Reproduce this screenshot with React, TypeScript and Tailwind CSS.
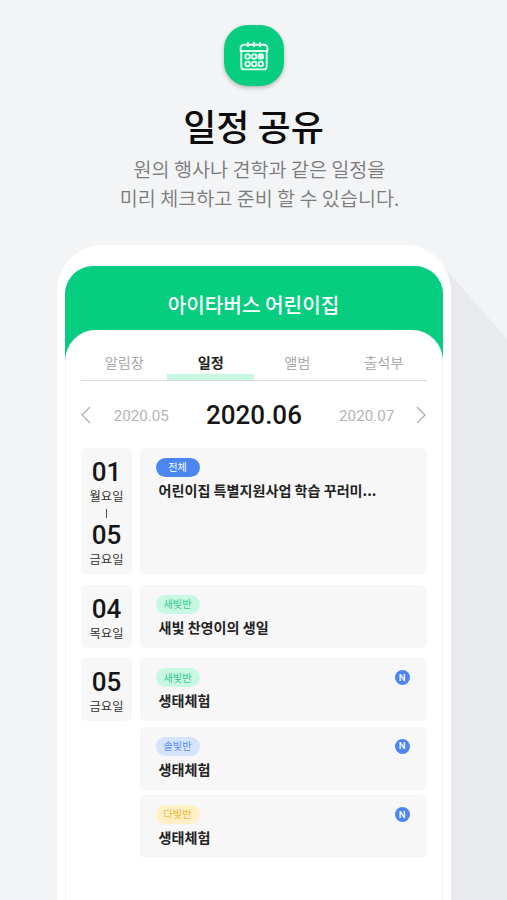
/**
 * Pantalla promocional del calendario compartido
 */

interface Tab {
  name: string;
  active?: boolean;
}

interface EventItem {
  group: string;
  title: string;
  badge: string; // Clases de color de la etiqueta
  isNew?: boolean;
}

interface DayItem {
  day: string;
  weekday: string;
}

interface ScheduleRow {
  days: DayItem[];
  events: EventItem[];
}

const tabs: Tab[] = [
  { name: "알림장" },
  { name: "일정", active: true },
  { name: "앨범" },
  { name: "출석부" },
];

const schedule: ScheduleRow[] = [
  {
    days: [
      { day: "01", weekday: "월요일" },
      { day: "05", weekday: "금요일" },
    ],
    events: [
      {
        group: "전체",
        title: "어린이집 특별지원사업 학습 꾸러미...",
        badge: "bg-[#4c86f0] text-white",
      },
    ],
  },
  {
    days: [{ day: "04", weekday: "목요일" }],
    events: [
      {
        group: "새빛반",
        title: "새빛 찬영이의 생일",
        badge: "bg-[#c8f7e2] text-[#2fcb8b]",
      },
    ],
  },
  {
    days: [{ day: "05", weekday: "금요일" }],
    events: [
      {
        group: "새빛반",
        title: "생태체험",
        badge: "bg-[#c8f7e2] text-[#2fcb8b]",
        isNew: true,
      },
      {
        group: "솔빛반",
        title: "생태체험",
        badge: "bg-[#d5e3fd] text-[#5b8ff2]",
        isNew: true,
      },
      {
        group: "다빛반",
        title: "생태체험",
        badge: "bg-[#fff0c6] text-[#f8b53a]",
        isNew: true,
      },
    ],
  },
];

function CalendarIcon() {
  return (
    <svg
      width="30"
      height="30"
      viewBox="0 0 30 30"
      fill="none"
      stroke="#dcfff0"
      strokeWidth="1.9"
      strokeLinecap="round"
      strokeLinejoin="round"
    >
      <path d="M1.6 10V7.4Q1.6 3.8 5.2 3.8H24.8Q28.4 3.8 28.4 7.4V10Z" />
      <path d="M2.3 10V25.4Q2.3 28.4 5.3 28.4H24.7Q27.7 28.4 27.7 25.4V10" />
      <path d="M9 1.8v3.4M15 1.8v3.4M21 1.8v3.4" strokeWidth="2.2" />
      <circle cx="8.6" cy="15.6" r="2.3" />
      <circle cx="15.2" cy="15.6" r="2.3" />
      <circle cx="21.8" cy="15.6" r="2.3" fill="#dcfff0" />
      <circle cx="8.6" cy="22.9" r="2.3" />
      <circle cx="15.2" cy="22.9" r="2.3" />
      <circle cx="21.8" cy="22.9" r="2.3" />
    </svg>
  );
}

function Chevron({ d }: { d: string }) {
  return (
    <svg width="10" height="18" viewBox="0 0 10 18" fill="none" stroke="#b0b0b0" strokeWidth="1.3">
      <path d={d} />
    </svg>
  );
}

function DateCard({ days }: { days: DayItem[] }) {
  return (
    <div className="flex w-[51px] shrink-0 flex-col items-center self-start rounded-[5px] bg-[#f7f7f7] pt-[9px] pb-[6px]">
      {days.map((item, index) => (
        <div key={item.day} className="flex flex-col items-center">
          {/* Separador del rango de fechas */}
          {index > 0 && <span className="mt-[4px] mb-[2px] ml-[2px] h-[9px] w-px bg-[#555]" />}
          <span className="pl-px font-[Roboto] text-[26px] leading-[30px] font-medium text-[#161616]">
            {item.day}
          </span>
          <span className="pl-px text-[12.3px] leading-[18px] text-[#333]">{item.weekday}</span>
        </div>
      ))}
    </div>
  );
}

function EventCard({ event }: { event: EventItem }) {
  return (
    <div className="flex min-h-[63px] flex-1 items-start justify-between rounded-[5px] bg-[#f7f7f7] pt-[10px] pr-[17px] pl-4">
      <div>
        <span
          className={`flex h-[19px] w-11 items-center justify-center rounded-full text-[10.1px] leading-none ${event.badge}`}
        >
          {event.group}
        </span>
        <p className="mt-[3px] ml-[3px] text-[14.1px] leading-[21px] font-bold whitespace-nowrap text-[#222]">
          {event.title}
        </p>
      </div>
      {event.isNew && (
        <span className="mt-[2px] flex size-[15px] items-center justify-center rounded-full bg-[#4c86f0] font-[Roboto] text-[9.5px] leading-none font-medium text-white">
          N
        </span>
      )}
    </div>
  );
}

export default function App() {
  return (
    <div className="relative flex h-[900px] w-[507px] flex-col items-center overflow-hidden bg-[#f3f4f6] font-['Noto_Sans_CJK_KR',sans-serif]">
      {/* Sombra larga detrás del teléfono */}
      <svg className="absolute inset-0" width="507" height="900">
        <path d="M436 258L507 339V900H436Z" fill="#e8eaed" />
      </svg>

      {/* Encabezado */}
      <div className="mt-[25px] ml-px flex h-[61px] w-[60px] items-center justify-center rounded-[24px] bg-[#06cd7f] shadow-[0_2px_4px_rgba(0,0,0,0.25)]">
        <CalendarIcon />
      </div>
      <h1 className="mt-[13px] text-[36px] leading-[52px] font-medium text-[#0c0c0c]">일정 공유</h1>
      <p className="mt-[3px] pl-3 text-center text-[19.6px] leading-[29px] font-[350] whitespace-nowrap text-[#7a7a7a]">
        원의 행사나 견학과 같은 일정을
        <br />
        미리 체크하고 준비 할 수 있습니다.
      </p>

      {/* Teléfono */}
      <div className="relative mt-[33px] flex w-[394px] flex-1 flex-col rounded-t-[46px] bg-white px-2 pt-[21px]">
        <div className="flex flex-1 flex-col rounded-t-[28px] bg-[#06cd7f]">
          <div className="flex h-16 items-center justify-center pt-[15px] text-[20.2px] font-medium text-white">
            아이타버스 어린이집
          </div>

          <div className="flex-1 rounded-t-[31px] border-x border-[#f3f4f4] bg-white px-[15px]">
            {/* Pestañas */}
            <nav className="flex h-[51px] border-b border-[#d9d9d9]">
              {tabs.map((tab) => (
                <span
                  key={tab.name}
                  className={`flex flex-1 items-center justify-center border-b-[6px] pt-[20px] pl-px text-[14.2px] leading-[24px] ${
                    tab.active
                      ? "border-[#c8f7e2] font-bold text-[#222]"
                      : "border-transparent text-[#aaa]"
                  }`}
                >
                  {tab.name}
                </span>
              ))}
            </nav>

            {/* Selector de mes */}
            <div className="flex h-[67px] items-center justify-between font-[Roboto]">
              <Chevron d="M9 1L1 9L9 17" />
              <span className="pt-[3px] pl-px text-[15.2px] text-[#b5b5b5]">2020.05</span>
              <span className="mx-[14px] pt-[2px] pl-px text-[26px] font-medium text-[#161616]">2020.06</span>
              <span className="pt-[3px] pl-px text-[15.2px] text-[#b5b5b5]">2020.07</span>
              <Chevron d="M1 1L9 9L1 17" />
            </div>

            {/* Agenda */}
            <div className="flex flex-col gap-[10.6px]">
              {schedule.map((row, index) => (
                <div key={index} className="flex gap-2">
                  <DateCard days={row.days} />
                  <div className="flex flex-1 flex-col gap-[5.4px]">
                    {row.events.map((event) => (
                      <EventCard key={event.group} event={event} />
                    ))}
                  </div>
                </div>
              ))}
            </div>
          </div>
        </div>
      </div>
    </div>
  );
}
